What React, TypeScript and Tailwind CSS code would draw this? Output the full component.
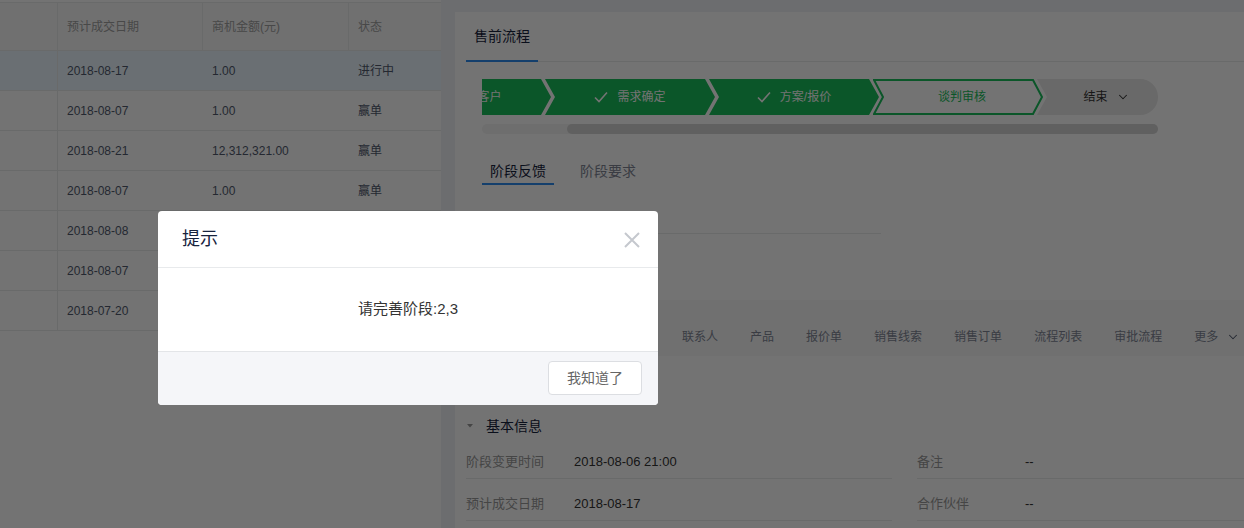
import { ChevronDown } from "lucide-react";

const rows = [
  { date: "2018-08-17", amount: "1.00", status: "进行中", active: true },
  { date: "2018-08-07", amount: "1.00", status: "赢单" },
  { date: "2018-08-21", amount: "12,312,321.00", status: "赢单" },
  { date: "2018-08-07", amount: "1.00", status: "赢单" },
  { date: "2018-08-08", amount: "1.00", status: "赢单" },
  { date: "2018-08-07", amount: "1.00", status: "赢单" },
  { date: "2018-07-20", amount: "1.00", status: "赢单" },
];

const detailTabs = ["详情", "跟进记录", "相关团队", "联系人", "产品", "报价单", "销售线索", "销售订单", "流程列表", "审批流程"];

function Check() {
  return (
    <svg width="14" height="12" viewBox="0 0 14 12" fill="none">
      <path d="M1 6.5 L5 10.5 L13 1.5" stroke="currentColor" strokeWidth="1.6" />
    </svg>
  );
}

function Step({ label, done, current, first }: { label: string; done?: boolean; current?: boolean; first?: boolean }) {
  return (
    <div className={`relative h-[36px] w-[170px] shrink-0 ${first ? "" : "-ml-[6px]"}`}>
      <svg className="absolute inset-0" width="170" height="36" viewBox="0 0 170 36">
        {current ? (
          <polygon points="1,1 160,1 169,18 160,35 1,35 10,18" fill="#ffffff" stroke="#19be5b" strokeWidth="2" />
        ) : (
          <polygon points="0,0 160,0 170,18 160,36 0,36 10,18" fill="#19be5b" />
        )}
      </svg>
      <div
        className={`relative flex h-full items-center justify-center gap-[9px] text-[12px] ${
          current ? "pl-[8px] text-[#19be5b]" : "text-white"
        }`}
      >
        {done && <Check />}
        <span>{label}</span>
      </div>
    </div>
  );
}

export default function App() {
  return (
    <div className="relative h-[528px] w-[1244px] overflow-hidden bg-[#f0f2f5] [font-family:'Liberation_Sans','Noto_Sans_CJK_SC',sans-serif]">
      <div className="flex h-full">
        {/* left table */}
        <div className="h-full w-[441px] shrink-0 overflow-hidden bg-white pt-[2px] text-[12px]">
          <div className="flex h-[49px] border-y border-[#e8eaec] bg-[#f8f8f9] text-[#a0a0a0]">
            <div className="w-[58px] border-r border-[#e8eaec]" />
            <div className="flex w-[145px] items-center border-r border-[#e8eaec] px-[9px]">预计成交日期</div>
            <div className="flex w-[146px] items-center border-r border-[#e8eaec] px-[9px]">商机金额(元)</div>
            <div className="flex flex-1 items-center px-[9px]">状态</div>
          </div>
          {rows.map((r, i) => (
            <div
              key={i}
              className={`flex h-[40px] border-b border-[#e8eaec] text-[#515a6e] ${r.active ? "bg-[#ebf7ff]" : ""}`}
            >
              <div className="w-[58px] border-r border-[#e8eaec]" />
              <div className="flex w-[145px] items-center px-[9px]">{r.date}</div>
              <div className="flex w-[146px] items-center px-[9px]">{r.amount}</div>
              <div className="flex flex-1 items-center px-[9px]">{r.status}</div>
            </div>
          ))}
        </div>

        <div className="w-[14px] shrink-0" />

        {/* right panel */}
        <div className="mt-[12px] w-[800px] shrink-0 bg-white pl-[11px] pr-[10px]">
          <div className="flex border-b border-[#e8eaec]">
            <div className="-mb-px h-[50px] border-b-2 border-[#2d8cf0] px-[8px] pt-[15px] text-[14px] leading-[18px] text-[#17233d]">
              售前流程
            </div>
          </div>

          <div className="ml-[16px] mt-[17px] w-[676px]">
            <div className="h-[36px] overflow-hidden">
              <div className="-ml-[101px] flex">
                <Step first done label="意向客户" />
                <Step done label="需求确定" />
                <Step done label="方案/报价" />
                <Step current label="谈判审核" />
                <div className="relative -ml-[6px] h-[36px] w-[121px] shrink-0">
                  <svg className="absolute inset-0" width="121" height="36" viewBox="0 0 121 36">
                    <path d="M0 0 H103 A18 18 0 0 1 103 36 H0 L10 18 Z" fill="#e8e8e8" />
                  </svg>
                  <div className="relative flex h-full items-center justify-center gap-[8px] pl-[18px] text-[12px] text-[#333]">
                    <span>结束</span>
                    <ChevronDown size={14} strokeWidth={1.8} />
                  </div>
                </div>
              </div>
            </div>
            <div className="mt-[9px] flex h-[10px] rounded-full bg-[#f3f3f3]">
              <div className="ml-[85px] h-full flex-1 rounded-full bg-[#d6d6d6]" />
            </div>
          </div>

          <div className="ml-[16px] mt-[28px] flex gap-[18px] text-[14px] leading-[18px]">
            <div className="border-b-2 border-[#2d8cf0] px-[8px] pb-[3px] text-[#17233d]">阶段反馈</div>
            <div className="px-[8px] text-[#808695]">阶段要求</div>
          </div>
          <div className="ml-[16px] mt-[48px] w-[399px] border-b border-[#e8eaec]" />

          <div className="-ml-[11px] -mr-[10px] mt-[66px] flex h-[56px] gap-[32px] bg-[#f8f8f9] pl-[11px] pr-[10px] pt-[28px] text-[12px] leading-[18px] text-[#808695]">
            {detailTabs.map((t) => (
              <span key={t}>{t}</span>
            ))}
            <span className="flex gap-[8px]">
              更多
              <ChevronDown size={14} strokeWidth={1.8} className="mt-[2px] text-[#515a6e]" />
            </span>
          </div>

          <div className="mt-[61px] flex items-center text-[14px] leading-[18px] text-[#17233d]">
            <svg width="20" height="18" viewBox="0 0 20 18">
              <polygon points="1,7 7,7 4,10.5" fill="#999" />
            </svg>
            <span>基本信息</span>
          </div>

          <div className="mt-[2px] flex text-[13px] leading-[20px]">
            <div className="w-[426px] shrink-0">
              <div className="flex h-[42px] border-b border-[#e8eaec] pt-[15px]">
                <span className="w-[108px] text-[#999]">阶段变更时间</span>
                <span className="text-[#333]">2018-08-06 21:00</span>
              </div>
              <div className="flex h-[42px] border-b border-[#e8eaec] pt-[15px]">
                <span className="w-[108px] text-[#999]">预计成交日期</span>
                <span className="text-[#333]">2018-08-17</span>
              </div>
            </div>
            <div className="ml-[25px] flex-1">
              <div className="flex h-[42px] border-b border-[#e8eaec] pt-[15px]">
                <span className="w-[108px] text-[#999]">备注</span>
                <span className="text-[#333]">--</span>
              </div>
              <div className="flex h-[42px] border-b border-[#e8eaec] pt-[15px]">
                <span className="w-[108px] text-[#999]">合作伙伴</span>
                <span className="text-[#333]">--</span>
              </div>
            </div>
          </div>
        </div>
      </div>

      {/* mask */}
      <div className="absolute inset-0 bg-black/55" />

      {/* modal */}
      <div className="absolute left-[158px] top-[211px] w-[500px] overflow-hidden rounded-[4px] bg-white">
        <div className="flex h-[57px] items-center justify-between border-b border-[#e8eaec] pl-[24px] pr-[18px]">
          <span className="text-[18px] text-[#17233d]">提示</span>
          <svg width="16" height="16" viewBox="0 0 16 16" className="mt-[1px]">
            <path d="M1 1 L15 15 M15 1 L1 15" stroke="#c5c8ce" strokeWidth="2" />
          </svg>
        </div>
        <div className="flex h-[83px] items-center justify-center text-[15px] text-[#333]">请完善阶段:2,3</div>
        <div className="flex h-[54px] justify-end border-t border-[#e3e5e8] bg-[#f5f6f9] pr-[16px] pt-[9px]">
          <button className="h-[34px] w-[94px] rounded-[4px] border border-[#dcdee2] bg-white text-[14px] text-[#666]">
            我知道了
          </button>
        </div>
      </div>
    </div>
  );
}
